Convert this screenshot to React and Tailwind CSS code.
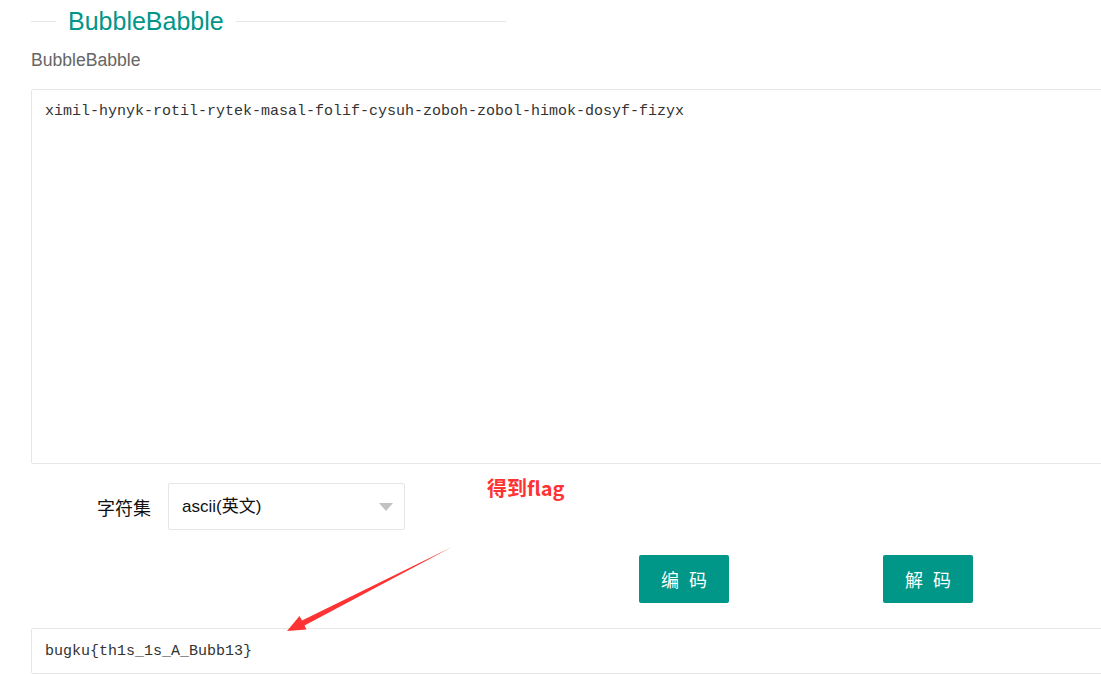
import React from "react";

export default function App() {
  const sans = "font-['Liberation_Sans','Noto_Sans_CJK_SC',sans-serif]";
  const mono = "font-['Liberation_Mono','Noto_Sans_CJK_SC',monospace]";
  return (
    <div className={`relative w-[1101px] h-[674px] overflow-hidden bg-white ${sans}`}>
      <div className="pl-[31px]">
        {/* fieldset title */}
        <div className="mt-[9px] flex h-[24px] w-[475px] items-center">
          <div className="h-px w-[25px] bg-[#e6e6e6]" />
          <div className="px-[12px] text-[25px] leading-[24px] text-[#009688]">BubbleBabble</div>
          <div className="h-px flex-1 bg-[#e6e6e6]" />
        </div>

        <div className="mt-[17px] text-[17.6px] leading-[20px] text-[#666]">BubbleBabble</div>

        <textarea
          readOnly
          defaultValue="ximil-hynyk-rotil-rytek-masal-folif-cysuh-zoboh-zobol-himok-dosyf-fizyx"
          className={`mt-[19px] block h-[375px] w-[1100px] resize-none rounded-[2px] border border-[#e6e6e6] px-[13px] pt-[12px] text-[15px] leading-[20px] text-[#333] outline-none ${mono}`}
        />

        {/* charset row */}
        <div className="mt-[19px] flex items-center pl-[66px]">
          <span className="text-[18px] leading-[24px] text-[#111] font-['Noto_Sans_CJK_SC',sans-serif]">字符集</span>
          <div className="ml-[17px] flex h-[47px] w-[237px] items-center justify-between rounded-[2px] border border-[#e6e6e6] pl-[13px] pr-[11px]">
            <span className="text-[17px] text-[#111]">ascii(英文)</span>
            <span className="h-0 w-0 border-x-[7px] border-t-[8px] border-x-transparent border-t-[#c2c2c2]" />
          </div>
        </div>

        {/* buttons */}
        <div className="mt-[25px] flex pl-[608px] gap-[154px]">
          <button className="flex h-[48px] w-[90px] items-center justify-center rounded-[2px] bg-[#009688] text-[18px] text-white font-['Noto_Sans_CJK_SC',sans-serif]">
            <span className="pl-[10px] tracking-[10px]">编码</span>
          </button>
          <button className="flex h-[48px] w-[90px] items-center justify-center rounded-[2px] bg-[#009688] text-[18px] text-white font-['Noto_Sans_CJK_SC',sans-serif]">
            <span className="pl-[10px] tracking-[10px]">解码</span>
          </button>
        </div>

        {/* output */}
        <div className={`mt-[25px] flex h-[46px] w-[1100px] items-center rounded-[2px] border border-[#e6e6e6] px-[13px] pt-[3px] text-[15px] text-[#333] ${mono}`}>
          bugku{"{"}th1s_1s_A_Bubb13{"}"}
        </div>
      </div>

      {/* annotation */}
      <div className="absolute left-[487px] top-[475px] text-[20px] font-semibold leading-[26px] text-[#f33] font-['Noto_Sans_CJK_SC',sans-serif]">
        得到flag
      </div>
      <svg className="pointer-events-none absolute left-0 top-0" width="1101" height="674">
        <polygon
          points="287,631 299.5,616 302,620.5 452,547 304.5,625.5 306.5,629.5"
          fill="#f33"
        />
      </svg>
    </div>
  );
}
